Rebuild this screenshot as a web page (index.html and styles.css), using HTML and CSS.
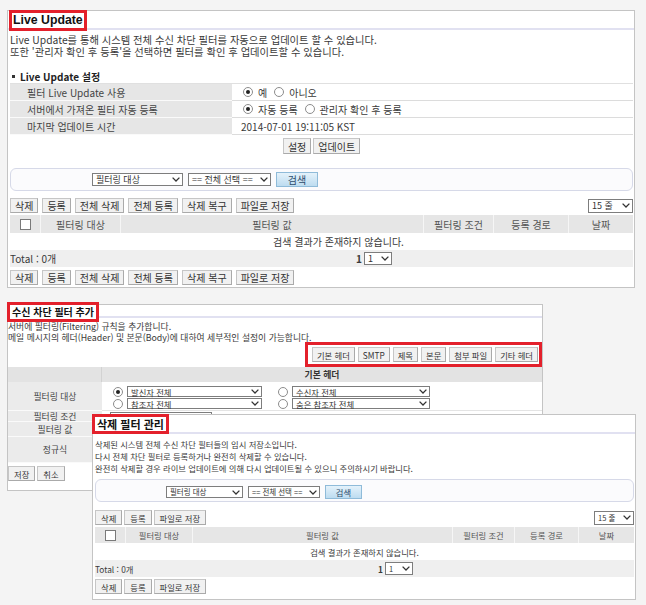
FILE: index.html
```html
<!DOCTYPE html>
<html lang="ko">
<head>
    <meta charset="UTF-8">
    <meta name="viewport" content="width=device-width, initial-scale=1.0">
    <title>Live Update</title>
    <link rel="stylesheet" href="styles.css">
</head>
<body>
<div class="desktop">

    <!-- Live Update -->
    <div class="window live-window">
        <div class="title-bar"><span class="title-mark">Live Update</span></div>
        <div class="window-body">
            <p class="desc">Live Update를 통해 시스템 전체 수신 차단 필터를 자동으로 업데이트 할 수 있습니다.<br>또한 '관리자 확인 후 등록'을 선택하면 필터를 확인 후 업데이트할 수 있습니다.</p>
            <h2 class="section-title"><span class="bullet"></span>Live Update 설정</h2>
            <div class="settings">
                <div class="settings-label">필터 Live Update 사용</div>
                <div class="settings-value">
                    <span class="radio checked"></span><span class="opt">예</span>
                    <span class="radio"></span><span class="opt">아니오</span>
                </div>
                <div class="settings-label">서버에서 가져온 필터 자동 등록</div>
                <div class="settings-value">
                    <span class="radio checked"></span><span class="opt">자동 등록</span>
                    <span class="radio"></span><span class="opt">관리자 확인 후 등록</span>
                </div>
                <div class="settings-label">마지막 업데이트 시간</div>
                <div class="settings-value date">2014-07-01 19:11:05 KST</div>
            </div>
            <div class="action-row">
                <button class="btn">설정</button>
                <button class="btn">업데이트</button>
            </div>
            <div class="search-box live-search">
                <span class="select sel-target">필터링 대상<svg class="chev" viewBox="0 0 8 5"><path d="M0.6 0.6 L4 4 L7.4 0.6" /></svg></span>
                <span class="select sel-all">== 전체 선택 ==<svg class="chev" viewBox="0 0 8 5"><path d="M0.6 0.6 L4 4 L7.4 0.6" /></svg></span>
                <button class="btn btn-search">검색</button>
            </div>
            <div class="toolbar">
                <button class="btn">삭제</button>
                <button class="btn">등록</button>
                <button class="btn">전체 삭제</button>
                <button class="btn">전체 등록</button>
                <button class="btn">삭제 복구</button>
                <button class="btn">파일로 저장</button>
                <span class="select sel-rows">15 줄<svg class="chev" viewBox="0 0 8 5"><path d="M0.6 0.6 L4 4 L7.4 0.6" /></svg></span>
            </div>
            <div class="list">
                <div class="list-head">
                    <div class="cell"><span class="checkbox"></span></div>
                    <div class="cell">필터링 대상</div>
                    <div class="cell">필터링 값</div>
                    <div class="cell">필터링 조건</div>
                    <div class="cell">등록 경로</div>
                    <div class="cell">날짜</div>
                </div>
                <div class="list-empty">검색 결과가 존재하지 않습니다.</div>
                <div class="list-total">
                    <span class="total-label">Total : 0개</span>
                    <b class="page-no">1</b>
                    <span class="select sel-page">1<svg class="chev" viewBox="0 0 8 5"><path d="M0.6 0.6 L4 4 L7.4 0.6" /></svg></span>
                </div>
            </div>
            <div class="toolbar bottom">
                <button class="btn">삭제</button>
                <button class="btn">등록</button>
                <button class="btn">전체 삭제</button>
                <button class="btn">전체 등록</button>
                <button class="btn">삭제 복구</button>
                <button class="btn">파일로 저장</button>
            </div>
        </div>
    </div>

    <!-- 수신 차단 필터 추가 -->
    <div class="window add-window">
        <div class="title-bar"><span class="title-mark">수신 차단 필터 추가</span></div>
        <div class="window-body">
            <p class="desc">서버에 필터링(Filtering) 규칙을 추가합니다.<br>메일 메시지의 헤더(Header) 및 본문(Body)에 대하여 세부적인 설정이 가능합니다.</p>
            <div class="tab-strip">
                <div class="tab-box">
                    <button class="btn">기본 헤더</button>
                    <button class="btn">SMTP</button>
                    <button class="btn">제목</button>
                    <button class="btn">본문</button>
                    <button class="btn">첨부 파일</button>
                    <button class="btn">기타 헤더</button>
                </div>
            </div>
            <div class="filter-form">
                <div class="form-head-label"></div>
                <div class="form-head">기본 헤더</div>

                <div class="form-label row-target">필터링 대상</div>
                <div class="form-field row-target">
                    <div class="pick-line">
                        <span class="radio checked"></span>
                        <span class="select sel-pick">발신자 전체<svg class="chev" viewBox="0 0 8 5"><path d="M0.6 0.6 L4 4 L7.4 0.6" /></svg></span>
                        <span class="radio second"></span>
                        <span class="select sel-pick wide">수신자 전체<svg class="chev" viewBox="0 0 8 5"><path d="M0.6 0.6 L4 4 L7.4 0.6" /></svg></span>
                    </div>
                    <div class="pick-line">
                        <span class="radio"></span>
                        <span class="select sel-pick">참조자 전체<svg class="chev" viewBox="0 0 8 5"><path d="M0.6 0.6 L4 4 L7.4 0.6" /></svg></span>
                        <span class="radio second"></span>
                        <span class="select sel-pick wide">숨은 참조자 전체<svg class="chev" viewBox="0 0 8 5"><path d="M0.6 0.6 L4 4 L7.4 0.6" /></svg></span>
                    </div>
                </div>

                <div class="form-label row-cond">필터링 조건</div>
                <div class="form-field row-cond">
                    <span class="select sel-cond">포함하면<svg class="chev" viewBox="0 0 8 5"><path d="M0.6 0.6 L4 4 L7.4 0.6" /></svg></span>
                </div>

                <div class="form-label row-value">필터링 값</div>
                <div class="form-field row-value"></div>

                <div class="form-label row-regex">정규식</div>
                <div class="form-field row-regex"></div>
            </div>
            <div class="form-actions">
                <button class="btn">저장</button>
                <button class="btn">취소</button>
            </div>
        </div>
    </div>

    <!-- 삭제 필터 관리 -->
    <div class="window trash-window">
        <div class="title-bar"><span class="title-mark">삭제 필터 관리</span></div>
        <div class="window-body">
            <p class="desc">삭제된 시스템 전체 수신 차단 필터들의 임시 저장소입니다.<br>다시 전체 차단 필터로 등록하거나 완전히 삭제할 수 있습니다.<br>완전히 삭제할 경우 라이브 업데이트에 의해 다시 업데이트될 수 있으니 주의하시기 바랍니다.</p>
            <div class="search-box trash-search">
                <span class="select sel-target">필터링 대상<svg class="chev" viewBox="0 0 8 5"><path d="M0.6 0.6 L4 4 L7.4 0.6" /></svg></span>
                <span class="select sel-all">== 전체 선택 ==<svg class="chev" viewBox="0 0 8 5"><path d="M0.6 0.6 L4 4 L7.4 0.6" /></svg></span>
                <button class="btn btn-search">검색</button>
            </div>
            <div class="toolbar">
                <button class="btn">삭제</button>
                <button class="btn">등록</button>
                <button class="btn">파일로 저장</button>
                <span class="select sel-rows">15 줄<svg class="chev" viewBox="0 0 8 5"><path d="M0.6 0.6 L4 4 L7.4 0.6" /></svg></span>
            </div>
            <div class="list">
                <div class="list-head">
                    <div class="cell"><span class="checkbox"></span></div>
                    <div class="cell">필터링 대상</div>
                    <div class="cell">필터링 값</div>
                    <div class="cell">필터링 조건</div>
                    <div class="cell">등록 경로</div>
                    <div class="cell">날짜</div>
                </div>
                <div class="list-empty">검색 결과가 존재하지 않습니다.</div>
                <div class="list-total">
                    <span class="total-label">Total : 0개</span>
                    <b class="page-no">1</b>
                    <span class="select sel-page">1<svg class="chev" viewBox="0 0 8 5"><path d="M0.6 0.6 L4 4 L7.4 0.6" /></svg></span>
                </div>
            </div>
            <div class="toolbar bottom">
                <button class="btn">삭제</button>
                <button class="btn">등록</button>
                <button class="btn">파일로 저장</button>
            </div>
        </div>
    </div>

</div>
</body>
</html>
```

FILE: styles.css
```css
* {
    box-sizing: border-box;
}

body {
    margin: 0;
    background-color: #f4f4f4;
    font-family: "Noto Sans CJK KR", "Liberation Sans", sans-serif;
    color: #3a3a3a;
}

.desktop {
    position: relative;
    width: 646px;
    height: 605px;
    overflow: hidden;
}

/* windows */
.window {
    position: absolute;
    background-color: #fff;
    border: 1px solid #c4c4c4;
}

.live-window {
    left: 7px;
    top: 10px;
    width: 628px;
    height: 278px;
    font-size: 10px;
}

.add-window {
    left: 7px;
    top: 304px;
    width: 536px;
    height: 187px;
    font-size: 8.8px;
}

.trash-window {
    left: 92px;
    top: 414px;
    width: 544px;
    height: 186px;
    font-size: 8.3px;
}

.title-bar {
    display: flex;
    align-items: flex-start;
    border-bottom: 2px solid #e1e1f1;
}

.live-window .title-bar { height: 19px; }
.add-window .title-bar { height: 13px; }
.trash-window .title-bar { height: 19px; }

.title-mark {
    display: block;
    height: 20px;
    padding: 0 1px;
    border: 3px solid #e3202b;
    background-color: #fff;
    color: #111;
    font-weight: bold;
    line-height: 14px;
    white-space: nowrap;
}

.live-window .title-mark {
    margin: -1px 0 0 1px;
    height: 21px;
    line-height: 15px;
    font-family: "Liberation Sans", sans-serif;
    font-size: 12.3px;
}

.add-window .title-mark {
    margin: -3px 0 0 -1px;
    padding: 0 2px;
    font-size: 10px;
}

.trash-window .title-mark {
    margin: -1px 0 0 -1px;
    padding: 0 2px;
    font-size: 11px;
}

.live-window .window-body,
.trash-window .window-body {
    padding: 0 1px 0 2px;
}

.desc {
    margin: 0;
    white-space: nowrap;
}

.live-window .desc { padding-top: 4px; line-height: 12px; font-size: 10.3px; }
.add-window .desc { padding-top: 3px; line-height: 11px; }
.trash-window .desc { padding-top: 4px; line-height: 12px; }

.section-title {
    display: flex;
    align-items: center;
    margin: 12px 0 0;
    height: 12px;
    font-size: 10px;
    color: #222;
}

.bullet {
    width: 3px;
    height: 3px;
    margin: 0 5px 0 2px;
    background-color: #333;
}

/* settings table */
.settings {
    display: grid;
    grid-template-columns: 222px 1fr;
    margin-top: 1px;
    border-top: 1px solid #e0e0e0;
}

.settings-label {
    display: flex;
    align-items: center;
    height: 17px;
    padding-left: 17px;
    background-color: #e6e6e6;
    border-bottom: 1px solid #fafafa;
    color: #444;
}

.settings-value {
    display: flex;
    align-items: center;
    height: 17px;
    padding-left: 11px;
    border-bottom: 1px solid #dcdcdc;
}

.settings-value.date {
    padding-left: 9px;
}

.opt {
    margin: 0 7px 0 5px;
}

.radio {
    position: relative;
    flex: none;
    display: inline-block;
    width: 10px;
    height: 10px;
    border: 1px solid #8c8c8c;
    border-radius: 50%;
    background-color: #fff;
}

.radio.checked::after {
    content: "";
    position: absolute;
    left: 2px;
    top: 2px;
    width: 4px;
    height: 4px;
    border-radius: 50%;
    background-color: #222;
}

.checkbox {
    display: inline-block;
    width: 11px;
    height: 11px;
    border: 1px solid #7a7a7a;
    background-color: #fff;
}

/* buttons & selects */
.btn {
    display: inline-flex;
    align-items: center;
    justify-content: center;
    height: 15px;
    margin: 0;
    padding: 0 5px;
    border: 1px solid #c6c6c6;
    border-right-color: #aaa;
    border-bottom-color: #aaa;
    background-color: #f1f1f1;
    color: #333;
    font-family: inherit;
    font-size: inherit;
    white-space: nowrap;
    cursor: pointer;
}

.live-window .btn {
    padding: 0 4px;
}

.action-row {
    display: flex;
    justify-content: center;
    gap: 2px;
    margin-top: 3px;
}

.action-row .btn {
    height: 16px;
}

.btn-search {
    background: linear-gradient(#e4f2fb, #bddcf0);
    border: 1px solid #8fbbd9;
    color: #2d4c6b;
}

.select {
    display: inline-flex;
    align-items: center;
    justify-content: space-between;
    flex: none;
    height: 13px;
    padding: 0 2px 0 3px;
    border: 1px solid #7d7d7d;
    background-color: #fff;
    color: #333;
    font-size: 0.9em;
    line-height: 10px;
    white-space: nowrap;
}

.chev {
    width: 8px;
    height: 5px;
    flex: none;
}

.chev path {
    fill: none;
    stroke: #333;
    stroke-width: 1.3;
}

/* search box */
.search-box {
    display: flex;
    align-items: flex-start;
    gap: 5px;
    height: 23px;
    border: 1px solid #d6d9e8;
    border-radius: 6px;
    background-color: #fbfbfd;
}

.live-search {
    margin: 14px 0 0;
    padding: 4px 0 0 81px;
}

.live-search .sel-target { width: 91px; }
.live-search .sel-all { width: 83px; }
.live-search .btn-search { width: 42px; height: 15px; margin-top: -1px; }

.trash-search {
    margin: 5px 0 0;
    padding: 6px 0 0 70px;
    gap: 5px;
}

.trash-search .sel-target { width: 77px; height: 12px; }
.trash-search .sel-all { width: 72px; height: 12px; }
.trash-search .btn-search { width: 37px; height: 14px; margin-top: -1px; }

/* toolbars */
.toolbar {
    display: flex;
    align-items: center;
    gap: 4px;
    height: 15px;
}

.live-window .toolbar { margin-top: 7px; }
.live-window .toolbar.bottom { margin-top: 3px; }
.trash-window .toolbar { margin-top: 8px; gap: 2px; }
.trash-window .toolbar.bottom { margin-top: 2px; }

.sel-rows {
    margin-left: auto;
    width: 45px;
    height: 14px;
}

.trash-window .sel-rows {
    width: 40px;
}

/* list */
.list {
    margin-top: 2px;
}

.list-head {
    display: grid;
    background-color: #e6e6e6;
    color: #555;
}

.live-window .list-head {
    height: 18px;
    grid-template-columns: 30px 80px 303px 70px 75px 1fr;
}

.trash-window .list-head {
    height: 16px;
    grid-template-columns: 30px 67px 260px 62px 64px 1fr;
}

.list-head .cell {
    display: flex;
    align-items: center;
    justify-content: center;
    border-left: 1px solid #f6f6f6;
}

.list-head .cell:first-child {
    border-left: none;
}

.list-empty {
    display: flex;
    align-items: center;
    justify-content: center;
    height: 17px;
}

.live-window .list-empty {
    padding-left: 34px;
}

.list-total {
    display: flex;
    align-items: center;
    height: 17px;
    background-color: #efefef;
}

.live-window .total-label { width: 345px; }
.trash-window .total-label { width: 282px; }

.page-no {
    margin-right: 2px;
    padding-left: 1px;
}

.sel-page {
    width: 28px;
    height: 13px;
}

/* filter form */
.tab-strip {
    display: flex;
    justify-content: flex-end;
    margin-top: -1px;
}

.tab-box {
    display: flex;
    gap: 3px;
    padding: 2px 1px 2px 4px;
    border: 3px solid #e3202b;
}

.tab-box .btn {
    padding: 0 4px;
    font-size: 8.3px;
}

.filter-form {
    display: grid;
    grid-template-columns: 94px 1fr;
}

.form-head-label,
.form-head {
    height: 15px;
    background-color: #e3e3e3;
}

.form-head-label {
    border-right: 1px solid #d2d2d2;
}

.form-head {
    display: flex;
    align-items: center;
    justify-content: center;
    font-weight: bold;
    color: #333;
}

.form-label {
    display: flex;
    align-items: center;
    justify-content: center;
    background-color: #ebebeb;
    border-bottom: 1px solid #fafafa;
    color: #444;
}

.form-field {
    border-bottom: 1px solid #e4e4e4;
}

.row-target { height: 29px; }
.row-cond { height: 11px; }
.row-value { height: 15px; }
.row-regex { height: 26px; }

.form-field.row-target {
    display: flex;
    flex-direction: column;
    gap: 1px;
    padding: 4px 0 0 11px;
}

.form-field.row-cond {
    padding: 1px 0 0 8px;
}

.pick-line {
    display: flex;
    align-items: center;
    height: 11px;
}

.pick-line .radio {
    margin-right: 4px;
}

.pick-line .radio.second {
    margin-left: 16px;
}

.sel-pick {
    width: 135px;
    height: 11px;
    font-size: 8.3px;
}

.sel-pick.wide {
    width: 138px;
}

.sel-cond {
    width: 102px;
    height: 12px;
    font-size: 8.3px;
}

.form-actions {
    display: flex;
    gap: 2px;
    margin-top: 3px;
}

.form-actions .btn {
    font-size: 8.3px;
}
```
